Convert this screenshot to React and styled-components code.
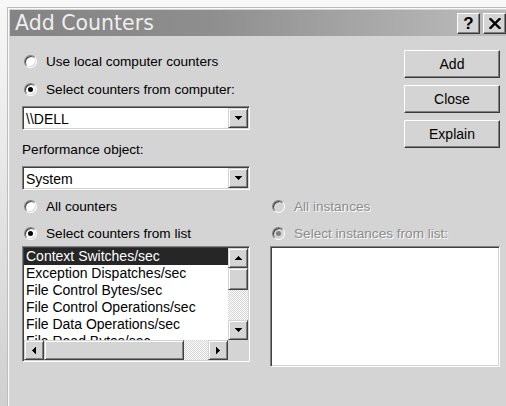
import React from 'react';
import styled, { createGlobalStyle, css } from 'styled-components';

const FACE = '#d4d4d4';

const Global = createGlobalStyle`
  html, body { margin: 0; padding: 0; height: 100%; overflow: hidden; }
  body {
    background: linear-gradient(#f8f8f8, #d0d0d0);
    font-family: "Liberation Sans", Arial, sans-serif;
    color: #000;
  }
`;

/* classic 3D edges */
const sunken = css`
  box-sizing: border-box;
  border: 1px solid;
  border-color: #808080 #ffffff #ffffff #808080;
  padding: 1px;
  box-shadow: inset 1px 1px 0 #404040, inset -1px -1px 0 ${FACE};
`;

const raised = css`
  box-sizing: border-box;
  border: 1px solid;
  border-color: #ffffff #3a3a3a #3a3a3a #ffffff;
  box-shadow: inset -1px -1px 0 #808080;
  background: ${FACE};
`;

const raisedSoft = css`
  box-sizing: border-box;
  border: 1px solid;
  border-color: ${FACE} #404040 #404040 ${FACE};
  box-shadow: inset 1px 1px 0 #ffffff, inset -1px -1px 0 #808080;
  background: ${FACE};
`;

const dither = css`
  background: repeating-conic-gradient(#ffffff 0 25%, ${FACE} 0 50%) 0 0 / 2px 2px;
`;

const Window = styled.div`
  box-sizing: border-box;
  margin: 7px 0 0 7px;
  width: 499px;
  height: calc(100vh - 7px);
  border-top: 1px solid #bdbdbd;
  border-left: 1px solid #bdbdbd;
  box-shadow: inset 1px 1px 0 #fafafa;
  padding: 2px 0 0 2px;
  background: ${FACE};
  display: flex;
  flex-direction: column;
  overflow: hidden;
`;

const TitleBar = styled.div`
  height: 26px;
  flex: none;
  display: flex;
  align-items: flex-start;
  justify-content: space-between;
  background: linear-gradient(90deg, #848484, #8e8e8e 40%, #bdbdbd);
`;

const Caption = styled.div`
  font-family: "DejaVu Sans", Verdana, sans-serif;
  font-size: 20.5px;
  line-height: 26px;
  color: #eeeeee;
  padding-left: 5px;
  white-space: nowrap;
`;

const CaptionButtons = styled.div`
  display: flex;
  gap: 3px;
  margin-top: 3px;
`;

const CaptionButton = styled.div`
  ${raised};
  width: 23px;
  height: 21px;
  display: flex;
  align-items: center;
  justify-content: center;
  font-weight: bold;
  font-size: 17px;
  line-height: 1;
`;

const Body = styled.div`
  flex: 1;
  display: grid;
  grid-template-columns: 228px 230px;
  column-gap: 20px;
  align-items: start;
  align-content: start;
  padding: 14px 0 0 12px;
`;

const LeftStack = styled.div`
  display: flex;
  flex-direction: column;
  padding-top: 2px;
`;

const ActionStack = styled.div`
  justify-self: end;
  display: flex;
  flex-direction: column;
  gap: 7px;
`;

const PushButton = styled.div`
  ${raised};
  width: 96px;
  height: 28px;
  display: flex;
  align-items: center;
  justify-content: center;
  font-size: 14px;
`;

const RadioRow = styled.div`
  display: flex;
  align-items: center;
  gap: 9px;
  height: 18px;
  padding-left: 2px;
  margin-top: ${(p) => p.$mt || 0}px;
  font-size: 13.6px;
  white-space: nowrap;
  color: ${(p) => (p.$disabled ? '#8c8c8c' : '#000')};
  text-shadow: ${(p) => (p.$disabled ? '1px 1px 0 #ffffff' : 'none')};
`;

const RadioCircle = styled.span`
  position: relative;
  box-sizing: border-box;
  flex: none;
  width: 13px;
  height: 13px;
  border-radius: 50%;
  border: 1px solid;
  border-color: #808080 #ffffff #ffffff #808080;
  box-shadow: inset 1px 1px 0 #404040, inset -1px -1px 0 ${FACE};
  background: ${(p) => (p.$disabled ? FACE : '#ffffff')};

  &::after {
    content: '';
    display: ${(p) => (p.$checked ? 'block' : 'none')};
    position: absolute;
    left: 3px;
    top: 3px;
    width: 5px;
    height: 5px;
    border-radius: 50%;
    background: ${(p) => (p.$disabled ? '#808080' : '#000000')};
  }
`;

const FieldLabel = styled.div`
  font-size: 13.6px;
  line-height: 17px;
  height: 17px;
  margin-top: ${(p) => p.$mt || 0}px;
`;

const Combo = styled.div`
  ${sunken};
  height: 24px;
  background: #ffffff;
  display: flex;
  margin-top: ${(p) => p.$mt || 0}px;
`;

const ComboText = styled.span`
  flex: 1;
  font-size: 14px;
  line-height: 20px;
  padding: 1px 0 0 2px;
  white-space: nowrap;
`;

const ScrollButton = styled.div`
  ${raisedSoft};
  flex: none;
  width: 20px;
  height: 20px;
  display: flex;
  align-items: center;
  justify-content: center;
`;

const ListFrame = styled.div`
  ${sunken};
  height: ${(p) => p.$h}px;
  margin-top: 4px;
  background: #ffffff;
`;

const ListGrid = styled.div`
  display: grid;
  grid-template-columns: 1fr 20px;
  grid-template-rows: 1fr 20px;
  height: 100%;
`;

const Items = styled.div`
  overflow: hidden;
`;

const Item = styled.div`
  font-size: 14px;
  line-height: 17px;
  height: 17px;
  padding-left: 2px;
  white-space: nowrap;
  background: ${(p) => (p.$selected ? '#262626' : 'transparent')};
  color: ${(p) => (p.$selected ? '#ffffff' : '#000000')};
`;

const VScroll = styled.div`
  display: flex;
  flex-direction: column;
`;

const HScroll = styled.div`
  display: flex;
`;

const VThumb = styled.div`
  ${raisedSoft};
  height: 22px;
  flex: none;
`;

const HThumb = styled.div`
  ${raisedSoft};
  width: 140px;
  flex: none;
`;

const Track = styled.div`
  flex: 1;
  ${dither};
`;

const Corner = styled.div`
  background: ${FACE};
`;

/* pixel arrows drawn as 1px rows */
const ARROWS = {
  up: { w: 7, h: 4, d: 'M3 0h1v1H3z M2 1h3v1H2z M1 2h5v1H1z M0 3h7v1H0z' },
  down: { w: 7, h: 4, d: 'M0 0h7v1H0z M1 1h5v1H1z M2 2h3v1H2z M3 3h1v1H3z' },
  left: { w: 4, h: 7, d: 'M0 3h1v1H0z M1 2h1v3H1z M2 1h1v5H2z M3 0h1v7H3z' },
  right: { w: 4, h: 7, d: 'M0 0h1v7H0z M1 1h1v5H1z M2 2h1v3H2z M3 3h1v1H3z' },
};

function Arrow({ dir }) {
  const a = ARROWS[dir];
  return (
    <svg width={a.w} height={a.h} viewBox={`0 0 ${a.w} ${a.h}`} shapeRendering="crispEdges">
      <path d={a.d} fill="#000" />
    </svg>
  );
}

function CloseGlyph() {
  return (
    <svg width="12" height="11" viewBox="0 0 12 11">
      <path d="M1.5 1 L10.5 10 M10.5 1 L1.5 10" stroke="#000" strokeWidth="2.4" strokeLinecap="square" />
    </svg>
  );
}

function Radio({ label, checked, disabled, mt }) {
  return (
    <RadioRow $mt={mt} $disabled={disabled}>
      <RadioCircle $checked={checked} $disabled={disabled} />
      <span>{label}</span>
    </RadioRow>
  );
}

function ComboBox({ value, mt }) {
  return (
    <Combo $mt={mt}>
      <ComboText>{value}</ComboText>
      <ScrollButton>
        <Arrow dir="down" />
      </ScrollButton>
    </Combo>
  );
}

const counters = [
  'Context Switches/sec',
  'Exception Dispatches/sec',
  'File Control Bytes/sec',
  'File Control Operations/sec',
  'File Data Operations/sec',
  'File Read Bytes/sec',
];

export default function App() {
  return (
    <>
      <Global />
      <Window>
        <TitleBar>
          <Caption>Add Counters</Caption>
          <CaptionButtons>
            <CaptionButton>?</CaptionButton>
            <CaptionButton>
              <CloseGlyph />
            </CaptionButton>
          </CaptionButtons>
        </TitleBar>
        <Body>
          <LeftStack>
            <Radio label="Use local computer counters" />
            <Radio label="Select counters from computer:" checked mt={10} />
            <ComboBox value={'\\\\DELL'} mt={8} />
            <FieldLabel $mt={11}>Performance object:</FieldLabel>
            <ComboBox value="System" mt={8} />
          </LeftStack>
          <ActionStack>
            <PushButton>Add</PushButton>
            <PushButton>Close</PushButton>
            <PushButton>Explain</PushButton>
          </ActionStack>

          <Radio label="All counters" mt={7} />
          <Radio label="All instances" disabled mt={7} />

          <Radio label="Select counters from list" checked mt={9} />
          <Radio label="Select instances from list:" checked disabled mt={9} />

          <ListFrame $h={116}>
            <ListGrid>
              <Items>
                {counters.map((c, i) => (
                  <Item key={c} $selected={i === 0}>
                    {c}
                  </Item>
                ))}
              </Items>
              <VScroll>
                <ScrollButton>
                  <Arrow dir="up" />
                </ScrollButton>
                <VThumb />
                <Track />
                <ScrollButton>
                  <Arrow dir="down" />
                </ScrollButton>
              </VScroll>
              <HScroll>
                <ScrollButton>
                  <Arrow dir="left" />
                </ScrollButton>
                <HThumb />
                <Track />
                <ScrollButton>
                  <Arrow dir="right" />
                </ScrollButton>
              </HScroll>
              <Corner />
            </ListGrid>
          </ListFrame>
          <ListFrame $h={121} />
        </Body>
      </Window>
    </>
  );
}
